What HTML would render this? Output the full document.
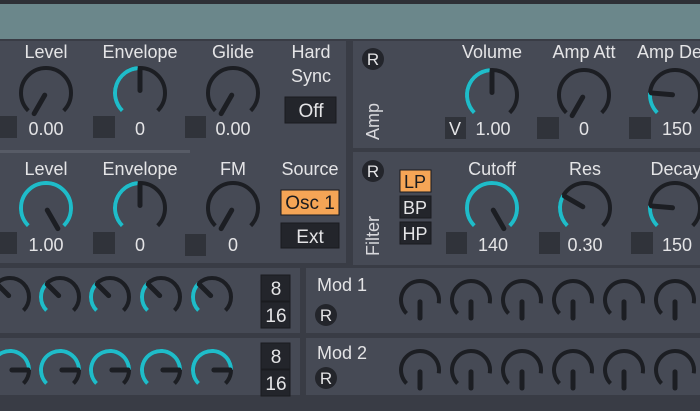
<!DOCTYPE html>
<html><head><meta charset="utf-8"><style>
body{margin:0;width:700px;height:406px;overflow:hidden;background:#393c45;font-family:"Liberation Sans",sans-serif;}
</style></head><body>
<svg id="s" width="700" height="406" xmlns="http://www.w3.org/2000/svg" font-family="Liberation Sans, sans-serif">
<rect x="0" y="0" width="700" height="406" fill="#393c45"/>
<rect x="0" y="0" width="700" height="4" fill="#2e3036"/>
<rect x="0" y="4" width="700" height="35" fill="#6b878b"/>
<rect x="0" y="41" width="346" height="222" fill="#464a55"/>
<rect x="0" y="150" width="190" height="3" fill="#575b66"/>
<rect x="353" y="41" width="347" height="107" fill="#464a55"/>
<rect x="353" y="152" width="347" height="113" fill="#464a55"/>
<rect x="0" y="268" width="300" height="65" fill="#464a55"/>
<rect x="306" y="268" width="394" height="65" fill="#464a55"/>
<rect x="0" y="338" width="300" height="57" fill="#464a55"/>
<rect x="306" y="338" width="394" height="57" fill="#464a55"/>
<g id="k"></g>
<g fill="#e4e4e6" font-size="18" text-anchor="middle">
<text x="46" y="58">Level</text><text x="140" y="58">Envelope</text><text x="233" y="58">Glide</text>
<text x="311" y="58">Hard</text><text x="311" y="82">Sync</text>
<text x="46" y="175">Level</text><text x="140" y="175">Envelope</text><text x="233" y="175">FM</text>
<text x="310" y="175">Source</text>
<text x="492" y="58">Volume</text><text x="584" y="58">Amp Att</text>
<text x="492" y="175">Cutoff</text><text x="585" y="175">Res</text><text x="676" y="175">Decay</text>
<text x="46" y="135">0.00</text><text x="140" y="135">0</text><text x="233" y="135">0.00</text>
<text x="46" y="251">1.00</text><text x="140" y="251">0</text><text x="233" y="251">0</text>
<text x="493" y="135">1.00</text><text x="584" y="135">0</text><text x="677" y="135">150</text>
<text x="493" y="251">140</text><text x="585" y="251">0.30</text><text x="677" y="251">150</text>
</g>
<text x="637" y="58" fill="#e4e4e6" font-size="18">Amp De</text>
<g fill="#30333a">
<rect x="0" y="116" width="17" height="22"/><rect x="93" y="116" width="22" height="22"/><rect x="185" y="116" width="21" height="22"/>
<rect x="0" y="232" width="17" height="22"/><rect x="93" y="232" width="22" height="22"/><rect x="185" y="234" width="21" height="22"/>
<rect x="445" y="117" width="21" height="22"/><rect x="537" y="117" width="22" height="22"/><rect x="629" y="117" width="22" height="22"/>
<rect x="446" y="232" width="21" height="22"/><rect x="539" y="232" width="21" height="22"/><rect x="631" y="232" width="22" height="22"/>
</g>
<text x="449" y="135" fill="#e4e4e6" font-size="18">V</text>
<rect x="285" y="97" width="51" height="26" fill="#23252b" stroke="#1a1b1f"/>
<text x="311" y="117" fill="#e4e4e6" font-size="19" text-anchor="middle">Off</text>
<rect x="281" y="190" width="58" height="25" fill="#f5a556" stroke="#1a1b1f"/>
<text x="310" y="209" fill="#1a1b1f" font-size="19" text-anchor="middle">Osc 1</text>
<rect x="281" y="223" width="58" height="25" fill="#23252b" stroke="#1a1b1f"/>
<text x="310" y="243" fill="#e4e4e6" font-size="19" text-anchor="middle">Ext</text>
<rect x="400" y="170" width="31" height="22" fill="#f5a556" stroke="#1a1b1f"/>
<text x="415" y="188" fill="#1a1b1f" font-size="18" text-anchor="middle">LP</text>
<rect x="400" y="196" width="31" height="22" fill="#23252b" stroke="#1a1b1f"/>
<text x="415" y="214" fill="#e4e4e6" font-size="18" text-anchor="middle">BP</text>
<rect x="400" y="222" width="31" height="22" fill="#23252b" stroke="#1a1b1f"/>
<text x="415" y="240" fill="#e4e4e6" font-size="18" text-anchor="middle">HP</text>
<g fill="#23252b" stroke="#1a1b1f">
<rect x="261" y="275" width="29" height="26"/><rect x="261" y="302" width="29" height="26"/>
<rect x="261" y="343" width="29" height="26"/><rect x="261" y="370" width="29" height="26"/>
</g>
<g fill="#e4e4e6" font-size="19" text-anchor="middle">
<text x="276" y="295">8</text><text x="276" y="322">16</text>
<text x="276" y="363">8</text><text x="276" y="390">16</text>
</g>
<text x="317" y="291" fill="#e4e4e6" font-size="18">Mod 1</text>
<text x="317" y="359" fill="#e4e4e6" font-size="18">Mod 2</text>
<g fill="#23252b"><circle cx="373" cy="59" r="11"/><circle cx="373" cy="171" r="11"/><circle cx="326" cy="315" r="11"/><circle cx="326" cy="378" r="11"/></g>
<g fill="#e4e4e6" font-size="17" text-anchor="middle">
<text x="373" y="65">R</text><text x="373" y="177">R</text><text x="326" y="321">R</text><text x="326" y="384">R</text>
</g>
<text transform="translate(379,140) rotate(-90)" fill="#d8d8dc" font-size="18">Amp</text>
<text transform="translate(379,256) rotate(-90)" fill="#d8d8dc" font-size="18">Filter</text>
</svg>
<script>
var g=document.getElementById('k'),ns='http://www.w3.org/2000/svg';
function pt(cx,cy,r,a){a=a*Math.PI/180;return [cx+r*Math.sin(a),cy-r*Math.cos(a)];}
function arc(cx,cy,r,a0,a1,col,w){if(a1-a0<1)return;var p=pt(cx,cy,r,a0),q=pt(cx,cy,r,a1);
var e=document.createElementNS(ns,'path');e.setAttribute('d','M'+p[0]+' '+p[1]+' A'+r+' '+r+' 0 '+((a1-a0)>180?1:0)+' 1 '+q[0]+' '+q[1]);
e.setAttribute('fill','none');e.setAttribute('stroke',col);e.setAttribute('stroke-width',w);g.appendChild(e);}
function line(cx,cy,r,a,w){var p=pt(cx,cy,r*0.1,a),q=pt(cx,cy,r*0.95,a);var e=document.createElementNS(ns,'line');
e.setAttribute('x1',p[0]);e.setAttribute('y1',p[1]);e.setAttribute('x2',q[0]);e.setAttribute('y2',q[1]);
e.setAttribute('stroke','#1c1e23');e.setAttribute('stroke-width',w+1);e.setAttribute('stroke-linecap','round');g.appendChild(e);}
function knob(cx,cy,r,t0,t1,n,w,end){end=end===undefined?135:end;arc(cx,cy,r,-135,end,'#1c1e23',w);arc(cx,cy,r,t0,t1,'#1fbcc9',w);line(cx,cy,r,n,w);}
var R=25,W=4;
knob(46,93,R,0,0,-150,W);knob(140,93,R,-135,-5,0,W);knob(233,93,R,0,0,-150,W);
knob(46,208,R,-135,135,150,W);knob(140,208,R,-135,-5,0,W);knob(233,208,R,0,0,-150,W);
knob(492,95,R,-135,-5,0,W);knob(584,95,R,0,0,-150,W);knob(675,95,R,-135,-85,-85,W);
knob(492,208,R,-135,135,150,W);knob(585,208,R,-135,-60,-60,W);knob(675,208,R,-135,-85,-85,W);
[10,60,110,161,212].forEach(function(x){knob(x,297,19,-135,-45,-45,4);knob(x,370,19,-135,90,90,4);});
[420,471,522,573,624,675].forEach(function(x){knob(x,300,19,0,0,180,4,100);knob(x,370,19,0,0,180,4,100);});
</script>
</body></html>
